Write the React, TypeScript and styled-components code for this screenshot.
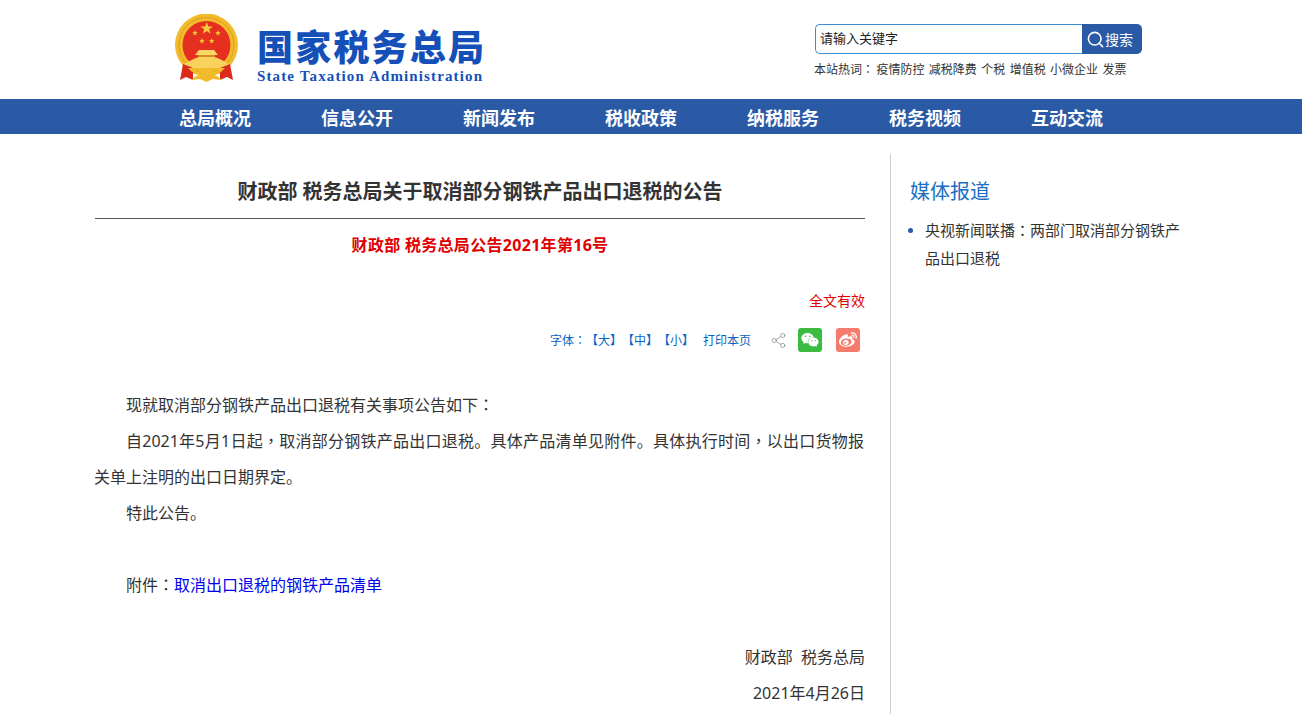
import styled, { createGlobalStyle } from 'styled-components';
import { Search, Share2 } from 'lucide-react';
import { FaWeibo, FaWeixin } from 'react-icons/fa';

const GlobalStyle = createGlobalStyle`
  html, body {
    margin: 0;
    padding: 0;
    background: #fff;
    font-family: "Noto Sans", "Noto Sans CJK SC", sans-serif;
    color: #333;
  }
  a { text-decoration: none; color: inherit; }
`;

// the reference centres its comma and colon in the cell
const Mark = styled.span`
  display: inline-block;
  width: 1em;
  text-align: center;
  text-indent: 0;
  font-family: "Noto Sans CJK TC", sans-serif;
  line-height: 0;
`;

const Header = styled.header`
  height: 99px;
  display: flex;
  justify-content: space-between;
  padding: 0 160px 0 175px;
  box-sizing: border-box;
`;

const Logo = styled.a`
  display: flex;
  align-items: flex-start;
  gap: 17px;
  padding-top: 14px;
`;

const LogoText = styled.div`
  display: flex;
  flex-direction: column;
  padding-top: 9px;
`;

const LogoCn = styled.div`
  font-family: "Noto Sans CJK SC", sans-serif;
  font-size: 36px;
  line-height: 44px;
  margin-bottom: 1px;
  font-weight: 900;
  letter-spacing: 2.2px;
  color: #1450b8;
  white-space: nowrap;
`;

const LogoEn = styled.div`
  font-family: "Liberation Serif", serif;
  font-size: 15px;
  line-height: 17px;
  font-weight: 700;
  letter-spacing: 1.13px;
  color: #1450b8;
  white-space: nowrap;
`;

const SearchArea = styled.div`
  width: 327px;
  padding-top: 24px;
`;

const SearchBox = styled.form`
  display: flex;
  height: 30px;
  margin: 0;
`;

const SearchInput = styled.div`
  flex: 1;
  box-sizing: border-box;
  border: 1px solid #3a8ed6;
  border-right: none;
  border-radius: 5px 0 0 5px;
  padding-left: 4px;
  font-size: 13px;
  line-height: 26px;
  color: #222;
`;

const SearchButton = styled.div`
  width: 60px;
  display: flex;
  align-items: center;
  padding-left: 4px;
  box-sizing: border-box;
  background: #2a5aa5;
  border-radius: 0 5px 5px 0;
  color: #fff;
  font-size: 14px;
`;

const HotWords = styled.div`
  margin: 7px 0 0 -1px;
  font-size: 12px;
  line-height: 17px;
  color: #333;
  white-space: nowrap;
  display: flex;
  gap: 4.4px;
`;

const HotLabel = styled.span`
  margin-right: -2px;
`;

const Nav = styled.nav`
  height: 35px;
  background: #2a5aa5;
  display: flex;
  justify-content: center;
  padding-right: 20px;
`;

const NavItem = styled.a`
  width: 142px;
  text-align: center;
  font-size: 18px;
  line-height: 39px;
  font-weight: 700;
  color: #fff;
`;

const Main = styled.main`
  width: 1112px;
  margin: 20px auto 0;
  display: flex;
`;

const Article = styled.article`
  width: 770px;
  padding-right: 25px;
  border-right: 1px solid #ccc;
`;

const Title = styled.h1`
  margin: 0;
  padding: 22px 0 10px;
  border-bottom: 1px solid #555;
  text-align: center;
  font-size: 20px;
  line-height: 32px;
  font-weight: 700;
  color: #333;
`;

const DocNumber = styled.div`
  margin-top: 11px;
  text-align: center;
  font-size: 16px;
  line-height: 30px;
  font-weight: 700;
  letter-spacing: 0.3px;
  color: #e00000;
`;

const Validity = styled.div`
  margin-top: 31px;
  text-align: right;
  font-size: 14px;
  line-height: 20px;
  color: #e00000;
`;

const Tools = styled.div`
  margin-top: 16px;
  height: 26px;
  padding-right: 5px;
  display: flex;
  justify-content: flex-end;
  align-items: center;
  font-size: 12px;
  color: #0a63c4;
`;

const PrintLink = styled.a`
  margin-left: 9px;
`;

const ShareIcon = styled(Share2)`
  margin-left: 19px;
  color: #888;
`;

const ShareBadge = styled.a<{ $bg: string; $gap: number }>`
  width: 24px;
  height: 24px;
  margin-left: ${(p) => p.$gap}px;
  border-radius: 3px;
  background: ${(p) => p.$bg};
  color: #fff;
  display: flex;
  align-items: center;
  justify-content: center;
`;

const Body = styled.div`
  margin-top: 34px;
  font-size: 16px;
  line-height: 36px;
  color: #333;
`;

const Para = styled.p<{ $right?: boolean }>`
  margin: ${(p) => (p.$right ? '0' : '0 1px 0 -1px')};
  min-height: 36px;
  text-align: ${(p) => (p.$right ? 'right' : 'justify')};
  text-indent: ${(p) => (p.$right ? '0' : '32px')};
`;

const Attachment = styled.a`
  color: #0000ee;
`;

const Sidebar = styled.aside`
  flex: 1;
  padding: 22px 25px 0 19px;
  min-height: 560px;
`;

const SideTitle = styled.h2`
  margin: 0;
  font-size: 20px;
  line-height: 32px;
  font-weight: 400;
  color: #1a6fc4;
`;

const SideList = styled.ul`
  margin: 8px 0 0;
  padding: 0 0 0 15px;
  list-style: disc;
  font-size: 15px;
  line-height: 28px;
  color: #333;

  li::marker {
    color: #2a5aa5;
    font-size: 14px;
  }
`;

const star = (cx: number, cy: number, r: number) => {
  const pts: string[] = [];
  for (let i = 0; i < 10; i++) {
    const rad = i % 2 === 0 ? r : r * 0.4;
    const a = (Math.PI / 5) * i - Math.PI / 2;
    pts.push(`${(cx + rad * Math.cos(a)).toFixed(2)},${(cy + rad * Math.sin(a)).toFixed(2)}`);
  }
  return pts.join(' ');
};

const Emblem = () => (
  <svg width="65" height="70" viewBox="0 0 65 70">
    <circle cx="31.5" cy="31" r="31.5" fill="#f2bb2c" />
    <circle cx="31.5" cy="31" r="27.5" fill="none" stroke="#e39c1c" strokeWidth="1" />
    <circle cx="31.5" cy="31" r="24" fill="#e5301f" />
    <polygon points={star(31.7, 14.5, 6.5)} fill="#f8cb3c" />
    <polygon points={star(20, 19, 3)} fill="#f8cb3c" />
    <polygon points={star(43, 19, 3)} fill="#f8cb3c" />
    <polygon points={star(27, 27, 3)} fill="#f8cb3c" />
    <polygon points={star(36.7, 27, 3)} fill="#f8cb3c" />
    <path d="M20 41 L24 36 H39 L43 41 Z" fill="#f8d766" />
    <rect x="23" y="41" width="17" height="2" fill="#d98a1e" />
    <path d="M9 50 Q20 44 24 43 H39 Q44 44 54 50 V54 H9 Z" fill="#f8d25c" />
    <path d="M8 50 L18 54 V66 L11 63 L5 66 Z" fill="#dc2a1c" />
    <path d="M55 50 L45 54 V66 L52 63 L58 66 Z" fill="#dc2a1c" />
    <path d="M13 54 H50 L46 58 L41 56 L36 60 L42 62 L47 66 L38 65 L31.5 68 L25 65 L16 66 L21 62 L27 60 L22 56 L17 58 Z" fill="#f2bb2c" />
  </svg>
);

const navItems = ['总局概况', '信息公开', '新闻发布', '税收政策', '纳税服务', '税务视频', '互动交流'];
const hotWords = ['疫情防控', '减税降费', '个税', '增值税', '小微企业', '发票'];

export default function App() {
  return (
    <>
      <GlobalStyle />
      <Header>
        <Logo href="#">
          <Emblem />
          <LogoText>
            <LogoCn>国家税务总局</LogoCn>
            <LogoEn>State Taxation Administration</LogoEn>
          </LogoText>
        </Logo>
        <SearchArea>
          <SearchBox>
            <SearchInput>请输入关键字</SearchInput>
            <SearchButton>
              <Search size={19} strokeWidth={2} />
              搜索
            </SearchButton>
          </SearchBox>
          <HotWords>
            <HotLabel>本站热词<Mark>：</Mark></HotLabel>
            {hotWords.map((w) => (
              <a key={w} href="#">{w}</a>
            ))}
          </HotWords>
        </SearchArea>
      </Header>
      <Nav>
        {navItems.map((n) => (
          <NavItem key={n} href="#">{n}</NavItem>
        ))}
      </Nav>
      <Main>
        <Article>
          <Title>财政部 税务总局关于取消部分钢铁产品出口退税的公告</Title>
          <DocNumber>财政部 税务总局公告2021年第16号</DocNumber>
          <Validity>全文有效</Validity>
          <Tools>
            字体<Mark>：</Mark>
            <a href="#">【大】</a>
            <a href="#">【中】</a>
            <a href="#">【小】</a>
            <PrintLink href="#">打印本页</PrintLink>
            <ShareIcon size={17} strokeWidth={1} />
            <ShareBadge href="#" $bg="#3bbb3f" $gap={11}>
              <FaWeixin size={18} />
            </ShareBadge>
            <ShareBadge href="#" $bg="#f57c6c" $gap={14}>
              <FaWeibo size={18} />
            </ShareBadge>
          </Tools>
          <Body>
            <Para>现就取消部分钢铁产品出口退税有关事项公告如下<Mark>：</Mark></Para>
            <Para>自2021年5月1日起<Mark>，</Mark>取消部分钢铁产品出口退税。具体产品清单见附件。具体执行时间<Mark>，</Mark>以出口货物报关单上注明的出口日期界定。</Para>
            <Para>特此公告。</Para>
            <Para />
            <Para>附件<Mark>：</Mark><Attachment href="#">取消出口退税的钢铁产品清单</Attachment></Para>
            <Para />
            <Para $right>财政部&nbsp; 税务总局</Para>
            <Para $right>2021年4月26日</Para>
          </Body>
        </Article>
        <Sidebar>
          <SideTitle>媒体报道</SideTitle>
          <SideList>
            <li>央视新闻联播<Mark>：</Mark>两部门取消部分钢铁产品出口退税</li>
          </SideList>
        </Sidebar>
      </Main>
    </>
  );
}
